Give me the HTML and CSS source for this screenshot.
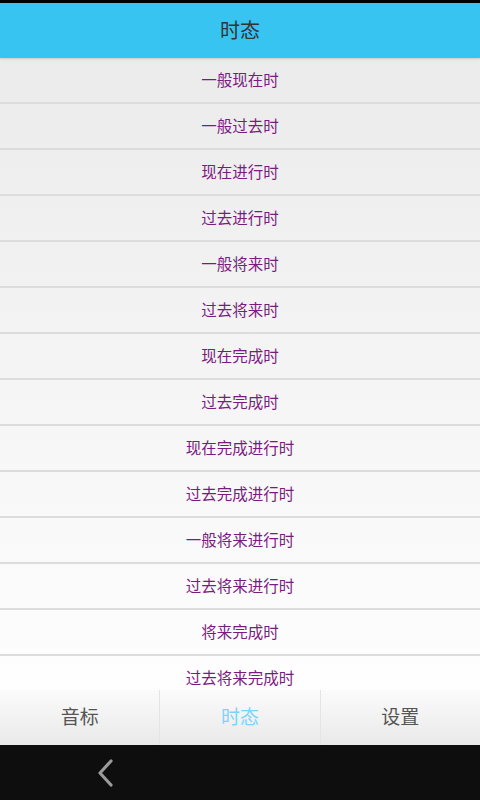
FILE: index.html
```html
<!DOCTYPE html>
<html lang="zh">

<head>
    <meta charset="UTF-8">
    <meta name="viewport" content="width=device-width, initial-scale=1.0">
    <title>时态</title>
    <link rel="stylesheet" href="styles.css">
</head>

<body>
    <div id="app">
        <div id="statusbar"></div>
        <div id="header">
            <h1>时态</h1>
        </div>
        <div id="list">
            <ul>
                <li>一般现在时</li>
                <li>一般过去时</li>
                <li>现在进行时</li>
                <li>过去进行时</li>
                <li>一般将来时</li>
                <li>过去将来时</li>
                <li>现在完成时</li>
                <li>过去完成时</li>
                <li>现在完成进行时</li>
                <li>过去完成进行时</li>
                <li>一般将来进行时</li>
                <li>过去将来进行时</li>
                <li>将来完成时</li>
                <li>过去将来完成时</li>
            </ul>
        </div>
        <div id="tabs">
            <div class="tab">音标</div>
            <div class="tab active">时态</div>
            <div class="tab">设置</div>
        </div>
        <div id="navbar">
            <svg class="back" width="20" height="30" viewBox="0 0 20 30">
                <polyline points="15,3 4,15 15,27" fill="none" stroke="#9a9a9a" stroke-width="3.2" stroke-linecap="round" stroke-linejoin="round" />
            </svg>
        </div>
    </div>
</body>

</html>
```

FILE: styles.css
```css
* {
    box-sizing: border-box;
}

body {
    margin: 0;
    font-family: "Noto Sans CJK SC", "Noto Sans", sans-serif;
}

#app {
    width: 480px;
    height: 800px;
    display: flex;
    flex-direction: column;
    overflow: hidden;
}

#statusbar {
    height: 3px;
    background: #000;
}

#header {
    height: 55px;
    padding-bottom: 3px;
    background: #38c4f1;
    display: flex;
    align-items: center;
    justify-content: center;
    box-shadow: 0 1px 2px rgba(0, 0, 0, 0.15);
    position: relative;
    z-index: 1;
}

#header h1 {
    margin: 0;
    font-size: 20px;
    font-weight: normal;
    color: #333;
}

#list {
    flex: 1;
    overflow: hidden;
    background: linear-gradient(to bottom, #ebebeb, #fefefe);
}

#list ul {
    list-style-type: none;
    margin: 0;
    padding: 0;
}

#list li {
    height: 46px;
    padding-bottom: 3px;
    border-bottom: 2px solid #dcdcdc;
    display: flex;
    align-items: center;
    justify-content: center;
    font-size: 15.5px;
    color: #7a1c7f;
}

#tabs {
    height: 55px;
    display: flex;
    background: linear-gradient(to bottom, #fbfbfb, #e9e9e9);
}

#tabs .tab {
    flex: 1;
    display: flex;
    align-items: center;
    justify-content: center;
    padding-bottom: 5px;
    font-size: 19px;
    color: #555;
    border-right: 1px solid #e4e4e4;
}

#tabs .tab:last-child {
    border-right: none;
}

#tabs .tab.active {
    color: #7ad6f7;
}

#navbar {
    height: 55px;
    background: #0e0e0e;
    display: flex;
    align-items: center;
    padding-left: 96px;
}
```
